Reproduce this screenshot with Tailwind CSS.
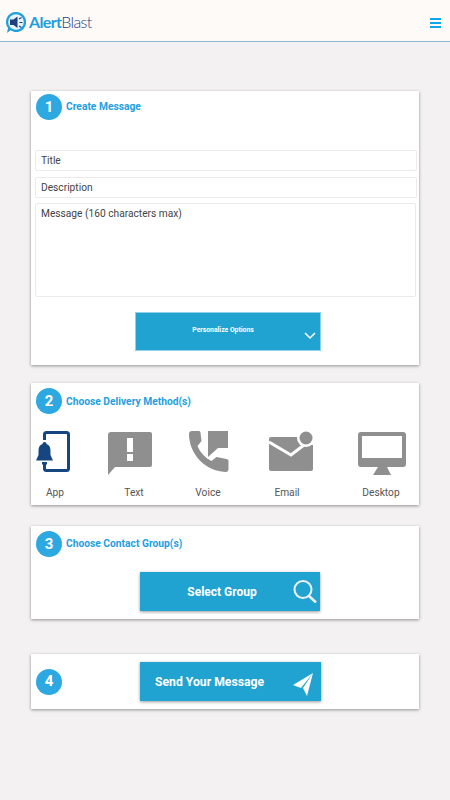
<!DOCTYPE html>
<html><head><meta charset="utf-8"><script src="https://cdn.jsdelivr.net/npm/@tailwindcss/browser@4"></script></head>
<body class="m-0 bg-[#f3f1f2] font-['Roboto',sans-serif]">
<div class="w-[450px] h-[800px] overflow-hidden flex flex-col">
<header class="h-[42px] shrink-0 bg-[#fefaf8] border-b border-[#8fb8d8] flex items-center justify-between pl-[6px] pr-[9px]">
  <div class="flex items-center gap-[3px] mt-[3px]">
    <svg width="20" height="21" viewBox="0 0 20 21"><path d="M10 0a10 10 0 1 1-5.500 18.300L1 21l1-5A10 10 0 0 1 10 0z" fill="#1f9fdc"/><circle cx="10" cy="10" r="7.800" fill="#e6f3fb"/><path d="M4 7.500h3.500l4-3v11.500l-4-3H4z" fill="#1f3f7f"/><path d="M13 7l2.500-1.500M13.500 10.500h3M13 14l2.500 1.500" stroke="#1f3f7f" stroke-width="1.200"/></svg>
    <div class="text-[16px] leading-none tracking-[-0.65px] font-['Lato',sans-serif]"><span class="text-[#1d9fe0] font-bold">Alert</span><span class="text-[#24407f] font-light">Blast</span></div>
  </div>
  <div class="w-[11px] flex flex-col gap-[2px] mt-[4px]"><i class="block h-[2px] bg-[#0ea5e9]"></i><i class="block h-[2px] bg-[#0ea5e9]"></i><i class="block h-[2px] bg-[#0ea5e9]"></i></div>
</header>
<main class="flex flex-col pl-[31px] pr-[31px] pt-[49px]">
  <section class="h-[274px] bg-white shadow-[0_1px_3px_rgba(0,0,0,0.4)] pl-[4px] pt-[3px]">
    <div class="flex items-center gap-[4px] ml-[1px]">
      <div class="w-[26px] h-[26px] rounded-full bg-[#2ea8e0] text-white font-bold text-[15px] flex items-center justify-center">1</div>
      <div class="text-[#1d9fe0] font-bold text-[10.250px]">Create Message</div>
    </div>
    <div class="mt-[30px] h-[21px] border border-[#eceaea] rounded-[2px] pl-[5px] text-[10.200px] leading-[19px] text-[#444] mr-[2px]">Title</div>
    <div class="mt-[6px] h-[21px] border border-[#eceaea] rounded-[2px] pl-[5px] text-[10.200px] leading-[19px] text-[#444] mr-[2px]">Description</div>
    <div class="mt-[5px] h-[94px] border border-[#eceaea] rounded-[2px] pl-[5px] pt-[4px] text-[10.200px] leading-[12px] text-[#444] mr-[3px]">Message (160 characters max)</div>
    <div class="mt-[15px] ml-[100px] w-[186px] h-[39px] bg-[#21a3d1] border border-[#8fcfe8] flex items-start relative">
      <div class="flex-1 text-center text-white font-bold text-[6.800px] mt-[12px] pr-[10px]">Personalize Options</div>
      <svg class="absolute right-[4px] top-[19px]" width="12" height="8" viewBox="0 0 12 8"><path d="M1 1l5 5 5-5" fill="none" stroke="#fff" stroke-width="1.500"/></svg>
    </div>
  </section>
  <section class="mt-[18px] h-[122px] bg-white shadow-[0_1px_3px_rgba(0,0,0,0.4)] px-[5px] pt-[5px]">
    <div class="flex items-center gap-[4px]">
      <div class="w-[26px] h-[26px] rounded-full bg-[#2ea8e0] text-white font-bold text-[15px] flex items-center justify-center">2</div>
      <div class="text-[#1d9fe0] font-bold text-[10.250px] mt-[2px]">Choose Delivery Method(s)</div>
    </div>
    <div class="flex mt-[17px] -ml-[2px] text-[10.200px] text-[#555]">
      <div class="w-[38px] flex flex-col items-center">
        <svg width="38" height="44" viewBox="0 0 38 44"><rect x="10.500" y="1.500" width="24" height="38" rx="2" fill="none" stroke="#15467f" stroke-width="3"/><rect x="7" y="9" width="6" height="23" fill="#fff"/><path d="M8.500 13a2 2 0 0 1 4 0c3 1 4 3.500 4 7v4l2.500 5.500H2L4.500 24v-4c0-3.500 1-6 4-7z" fill="#15467f"/><rect x="8" y="31" width="5" height="2.500" fill="#15467f"/></svg>
        <div class="mt-[10px] ml-[4px]">App</div>
      </div>
      <div class="ml-[36px] w-[44px] flex flex-col items-center">
        <svg width="44" height="44" viewBox="0 0 44 44"><path d="M3 1h39a2 2 0 0 1 2 2v31a2 2 0 0 1-2 2H7l-7 8V4a3 3 0 0 1 3-3z" fill="#8f8f8f"/><rect x="19" y="7" width="6" height="14" fill="#fff"/><rect x="19" y="23" width="6" height="7" fill="#fff"/></svg>
        <div class="mt-[10px] ml-[8px]">Text</div>
      </div>
      <div class="ml-[37px] w-[40px] flex flex-col items-center">
        <svg width="40" height="44" viewBox="0 0 40 44"><path d="M0 3c0-2 1-3 3-3h7c1 0 1.500 1 1.500 2l1 8-4 5c3 7 8 12 14 15l5-4 10 2c1 0 2 1 2 2v8c0 2-1 3-3 3C15 40 0 22 0 3z" fill="#8f8f8f"/><path d="M19 0h20v17H29l-10 9z" fill="#8f8f8f"/></svg>
        <div class="mt-[10px] mr-[2px]">Voice</div>
      </div>
      <div class="ml-[40px] w-[44px] flex flex-col items-center">
        <svg width="44" height="44" viewBox="0 0 44 44"><path d="M2 6h28l2 8 12 0v24a2 2 0 0 1-2 2H2a2 2 0 0 1-2-2V8a2 2 0 0 1 2-2z" fill="#8f8f8f"/><path d="M0 11l22 13 13-10" fill="none" stroke="#fff" stroke-width="3"/><circle cx="37" cy="7" r="9" fill="#fff"/><circle cx="37" cy="7" r="6.500" fill="#8f8f8f"/></svg>
        <div class="mt-[10px] mr-[8px]">Email</div>
      </div>
      <div class="ml-[45px] w-[48px] flex flex-col items-center">
        <svg width="48" height="44" viewBox="0 0 48 44"><path fill-rule="evenodd" d="M3 1h42a3 3 0 0 1 3 3v29a3 3 0 0 1-3 3H3a3 3 0 0 1-3-3V4a3 3 0 0 1 3-3zM4 5v22h40V5z" fill="#8f8f8f"/><path d="M20 36h9l4 8H15z" fill="#8f8f8f"/></svg>
        <div class="mt-[10px] mr-[2px]">Desktop</div>
      </div>
    </div>
  </section>
  <section class="mt-[21px] h-[93px] bg-white shadow-[0_1px_3px_rgba(0,0,0,0.4)] px-[5px] pt-[5px]">
    <div class="flex items-center gap-[4px]">
      <div class="w-[26px] h-[26px] rounded-full bg-[#2ea8e0] text-white font-bold text-[15px] flex items-center justify-center">3</div>
      <div class="text-[#1d9fe0] font-bold text-[10.250px]">Choose Contact Group(s)</div>
    </div>
    <div class="mt-[15px] ml-[104px] w-[180px] h-[39px] bg-[#21a3d1] shadow-[0_1px_3px_rgba(0,0,0,0.4)] flex items-center text-white relative">
      <div class="flex-1 text-center font-bold text-[12px] pr-[16px]">Select Group</div>
      <svg class="absolute right-[3px] top-[8px]" width="24" height="23" viewBox="0 0 24 23"><circle cx="10" cy="9.500" r="8.500" fill="none" stroke="#f0f0f0" stroke-width="2"/><path d="M16 16l7 6.500" stroke="#f0f0f0" stroke-width="2.500"/></svg>
    </div>
  </section>
  <section class="mt-[35px] h-[55px] bg-white shadow-[0_1px_3px_rgba(0,0,0,0.4)] pl-[5px] flex items-center">
    <div class="w-[26px] h-[26px] rounded-full bg-[#2ea8e0] text-white font-bold text-[15px] flex items-center justify-center">4</div>
    <div class="ml-[78px] w-[181px] h-[39px] bg-[#21a3d1] shadow-[0_1px_3px_rgba(0,0,0,0.4)] flex items-center text-white relative">
      <div class="pl-[15px] font-bold text-[12.200px] mt-[2px]">Send Your Message</div>
      <svg class="absolute right-[7px] top-[9px]" width="22" height="26" viewBox="0 0 22 26"><path d="M21 2 1 14l8 3zM21 2 11 17l4 8z" fill="#fff"/></svg>
    </div>
  </section>
</main>
</div>
</body></html>
